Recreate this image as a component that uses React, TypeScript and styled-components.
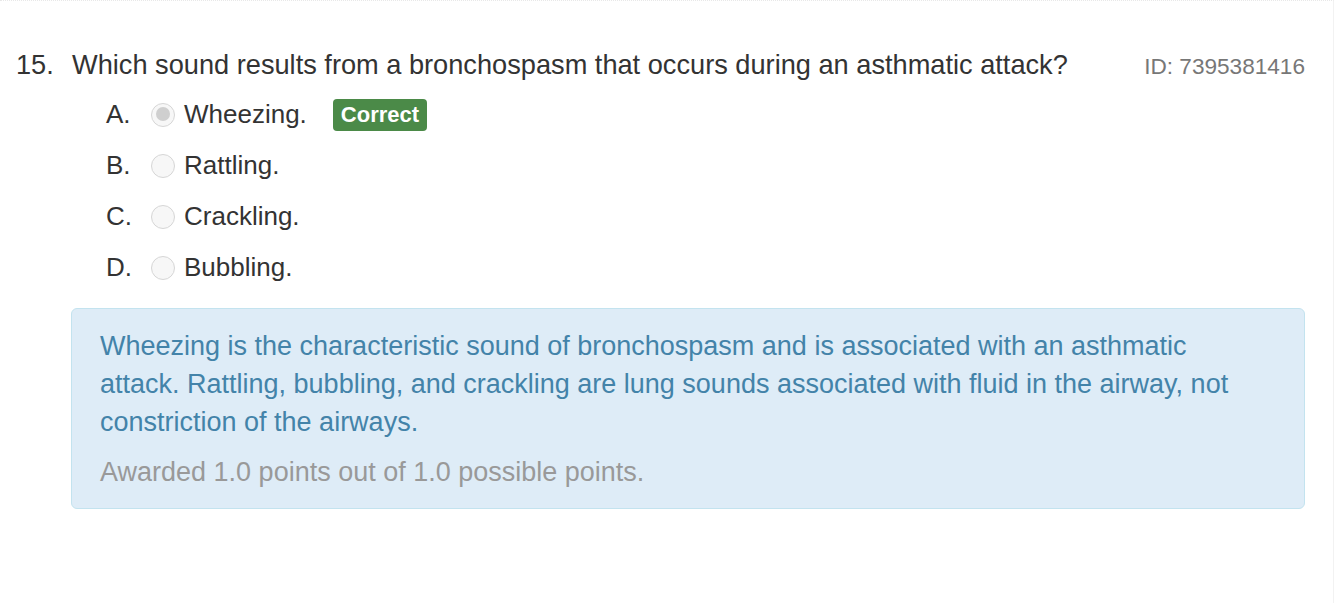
import styled, { createGlobalStyle } from "styled-components";

const GlobalStyle = createGlobalStyle`
  html, body {
    margin: 0;
    background: #fff;
  }
  body {
    font-family: "Liberation Sans", Arial, Helvetica, sans-serif;
    color: #333;
  }
`;

const options = [
    { letter: "A.", text: "Wheezing.", checked: true, correct: true },
    { letter: "B.", text: "Rattling.", checked: false, correct: false },
    { letter: "C.", text: "Crackling.", checked: false, correct: false },
    { letter: "D.", text: "Bubbling.", checked: false, correct: false },
];

export default function App() {
    return (
        <>
            <GlobalStyle/>
            <Page>
                <QuestionHeader>
                    <Number>15.</Number>
                    <QuestionText>Which sound results from a bronchospasm that occurs during an asthmatic attack?</QuestionText>
                    <QuestionId>ID: 7395381416</QuestionId>
                </QuestionHeader>
                <OptionList>
                    {options.map((o) => (
                        <OptionRow key={o.letter}>
                            <Letter>{o.letter}</Letter>
                            <Radio checked={o.checked}/>
                            <OptionText>{o.text}</OptionText>
                            {o.correct && <Badge>Correct</Badge>}
                        </OptionRow>
                    ))}
                </OptionList>
                <Explanation>
                    <ExplanationText>
                        Wheezing is the characteristic sound of bronchospasm and is associated with an asthmatic attack. Rattling, bubbling, and crackling are lung sounds associated with fluid in the airway, not constriction of the airways.
                    </ExplanationText>
                    <Points>Awarded 1.0 points out of 1.0 possible points.</Points>
                </Explanation>
            </Page>
        </>
    );
}

const Page = styled.div`
    min-height: 603px;
    box-sizing: border-box;
    border-top: 1px dotted #e8e8e8;
    border-right: 1px solid #f2f2f2;
    padding: 46px 28px 0 16px;
`

const QuestionHeader = styled.div`
    display: flex;
    align-items: baseline;
    font-size: 27.2px;
    line-height: 36px;
`

const Number = styled.span`
    width: 56px;
    flex-shrink: 0;
`

const QuestionText = styled.span`
    flex: 1;
`

const QuestionId = styled.span`
    color: #777;
    font-size: 22.6px;
`

const OptionList = styled.div`
    display: flex;
    flex-direction: column;
    margin-top: 4px;
    padding-left: 90px;
`

const OptionRow = styled.div`
    display: flex;
    align-items: center;
    height: 51px;
    font-size: 26px;
`

const Letter = styled.span`
    width: 45px;
`

const Radio = styled.span<{ checked: boolean }>`
    position: relative;
    box-sizing: border-box;
    width: 24px;
    height: 24px;
    border-radius: 50%;
    border: 1.5px solid #d6d6d6;
    background: #f7f7f7;
    margin-right: 9px;

    &::after {
        content: "";
        display: ${p => (p.checked ? "block" : "none")};
        position: absolute;
        left: 3.5px;
        top: 3.5px;
        width: 14px;
        height: 14px;
        border-radius: 50%;
        background: #cfcfcf;
    }
`

const OptionText = styled.span`
    color: #333;
`

const Badge = styled.span`
    margin-left: 26px;
    background: #4b8a48;
    color: #fff;
    font-weight: bold;
    font-size: 22px;
    line-height: 32px;
    padding: 0 8px;
    border-radius: 4px;
`

const Explanation = styled.div`
    margin: 15px 0 0 55px;
    background: #deecf7;
    border: 1px solid #c3e3ef;
    border-radius: 6px;
    padding: 18px 50px 17px 28px;
    font-size: 27px;
    line-height: 38px;
`

const ExplanationText = styled.p`
    margin: 0;
    color: #4383a9;
`

const Points = styled.p`
    margin: 12px 0 0;
    color: #999;
`
